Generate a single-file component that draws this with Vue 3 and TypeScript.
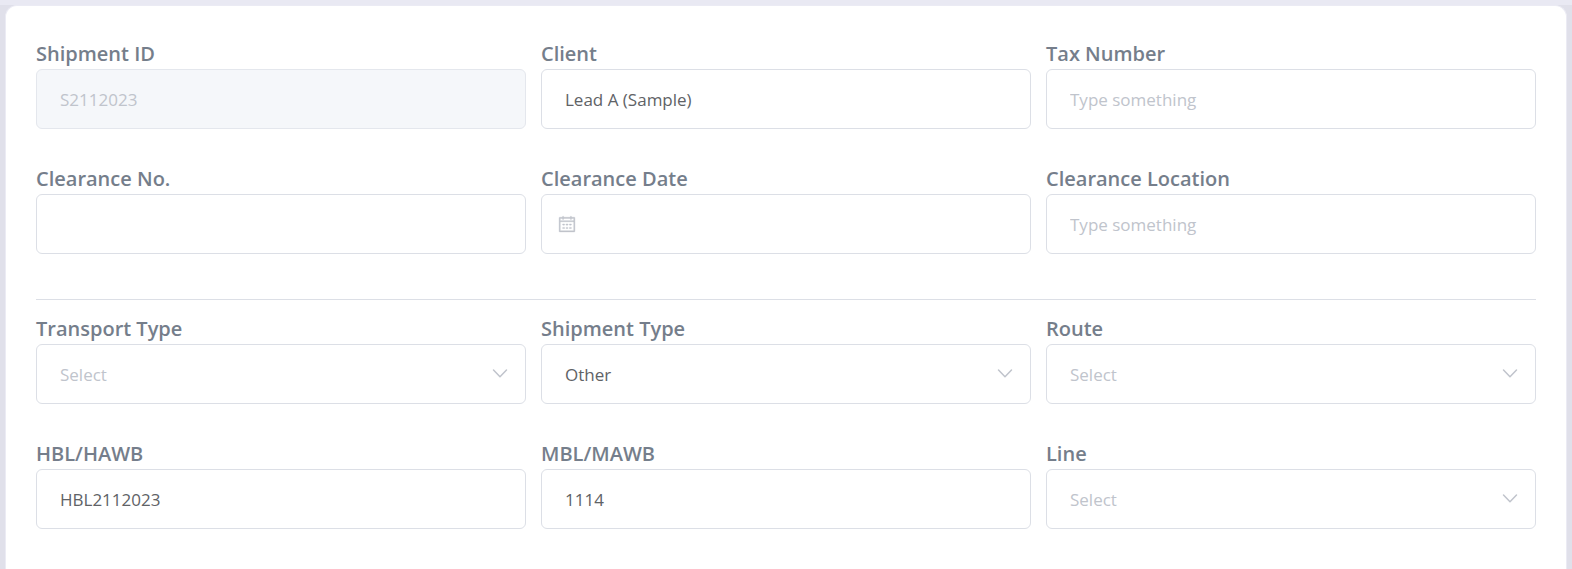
<script setup lang="ts">
import { reactive } from 'vue'

interface Field {
  id: string
  label: string
  kind: 'text' | 'date' | 'select'
  placeholder?: string
  disabled?: boolean
  options?: string[]
}

const values = reactive<Record<string, string>>({
  shipmentId: 'S2112023',
  client: 'Lead A (Sample)',
  taxNumber: '',
  clearanceNo: '',
  clearanceDate: '',
  clearanceLocation: '',
  transportType: '',
  shipmentType: 'Other',
  route: '',
  hbl: 'HBL2112023',
  mbl: '1114',
  line: '',
})

const sections: Field[][] = [
  [
    { id: 'shipmentId', label: 'Shipment ID', kind: 'text', disabled: true },
    { id: 'client', label: 'Client', kind: 'text' },
    { id: 'taxNumber', label: 'Tax Number', kind: 'text', placeholder: 'Type something' },
    { id: 'clearanceNo', label: 'Clearance No.', kind: 'text' },
    { id: 'clearanceDate', label: 'Clearance Date', kind: 'date' },
    { id: 'clearanceLocation', label: 'Clearance Location', kind: 'text', placeholder: 'Type something' },
  ],
  [
    { id: 'transportType', label: 'Transport Type', kind: 'select', options: [] },
    { id: 'shipmentType', label: 'Shipment Type', kind: 'select', options: ['Other'] },
    { id: 'route', label: 'Route', kind: 'select', options: [] },
    { id: 'hbl', label: 'HBL/HAWB', kind: 'text' },
    { id: 'mbl', label: 'MBL/MAWB', kind: 'text' },
    { id: 'line', label: 'Line', kind: 'select', options: [] },
  ],
]
</script>

<template>
  <main class="page">
    <form class="card" @submit.prevent>
      <section v-for="(fields, index) in sections" :key="index" class="section">
        <div v-for="field in fields" :key="field.id" class="field">
          <label class="label" :for="field.id">{{ field.label }}</label>
          <div class="control">
            <select
              v-if="field.kind === 'select'"
              :id="field.id"
              v-model="values[field.id]"
              class="box"
              :class="{ empty: !values[field.id] }"
            >
              <option value="" disabled hidden>Select</option>
              <option v-for="option in field.options" :key="option" :value="option">{{ option }}</option>
            </select>
            <input
              v-else
              :id="field.id"
              v-model="values[field.id]"
              class="box"
              :class="{ dated: field.kind === 'date' }"
              type="text"
              autocomplete="off"
              :placeholder="field.placeholder"
              :disabled="field.disabled"
            />
            <svg v-if="field.kind === 'select'" class="icon arrow" viewBox="0 0 18 18" aria-hidden="true">
              <path d="M2.5 5 9 11.8l6.5-6.8" fill="none" stroke="currentColor" stroke-width="1.5" stroke-linecap="round" stroke-linejoin="round" />
            </svg>
            <svg v-if="field.kind === 'date'" class="icon calendar" viewBox="0 0 1024 1024" aria-hidden="true">
              <path fill="currentColor" stroke="currentColor" stroke-width="22" d="M128 384v512h768V192H768v32a32 32 0 1 1-64 0v-32H320v32a32 32 0 0 1-64 0v-32H128v128h768v64H128zm192-256h384V96a32 32 0 1 1 64 0v32h160a32 32 0 0 1 32 32v768a32 32 0 0 1-32 32H96a32 32 0 0 1-32-32V160a32 32 0 0 1 32-32h160V96a32 32 0 0 1 64 0v32zm-32 384h64a32 32 0 0 1 0 64h-64a32 32 0 0 1 0-64zm0 192h64a32 32 0 1 1 0 64h-64a32 32 0 1 1 0-64zm192-192h64a32 32 0 0 1 0 64h-64a32 32 0 0 1 0-64zm0 192h64a32 32 0 1 1 0 64h-64a32 32 0 1 1 0-64zm192-192h64a32 32 0 1 1 0 64h-64a32 32 0 1 1 0-64zm0 192h64a32 32 0 1 1 0 64h-64a32 32 0 1 1 0-64z" />
            </svg>
          </div>
        </div>
      </section>
    </form>
  </main>
</template>

<style>
body {
  margin: 0;
  background: #e0e0ea;
}
</style>

<style scoped>
.page {
  box-sizing: border-box;
  min-height: 100vh;
  display: flex;
  flex-direction: column;
  padding: 0 5px;
  border-top: 5px solid #e9e9f3;
  font-family: "Segoe UI", "Open Sans", "Noto Sans", sans-serif;
}

.card {
  flex: 1;
  padding: 32px 30px 40px;
  border: 1px solid #ebebf4;
  border-bottom: 0;
  border-radius: 12px 12px 0 0;
  background: #fff;
}

.section {
  display: grid;
  grid-template-columns: repeat(3, minmax(0, 1fr));
  gap: 34px 15px;
}

.section + .section {
  margin-top: 45px;
  padding-top: 13px;
  border-top: 1px solid #dcdfe6;
}

.field {
  display: flex;
  flex-direction: column;
}

.label {
  align-self: flex-start;
  color: #757e8b;
  font-size: 20px;
  font-weight: 600;
  line-height: 31px;
}

.control {
  position: relative;
}

.box {
  display: block;
  box-sizing: border-box;
  width: 100%;
  height: 60px;
  margin: 0;
  padding: 0 23px;
  appearance: none;
  border: 1px solid #dcdfe6;
  border-radius: 6px;
  outline: none;
  background: #fff;
  color: #606266;
  font-family: inherit;
  font-size: 17px;
}

.box:focus {
  border-color: #409eff;
}

.box::placeholder {
  color: #c0c4cc;
  opacity: 1;
}

.box.empty {
  color: #c0c4cc;
}

.box:disabled {
  border-color: #e4e7ed;
  background: #f5f7fa;
  color: #c0c4cc;
}

.box.dated {
  padding-left: 45px;
}

.icon {
  position: absolute;
  top: 21px;
  width: 18px;
  height: 18px;
  color: #c0c4cc;
  pointer-events: none;
}

.arrow {
  right: 17px;
}

.calendar {
  left: 17px;
}
</style>
